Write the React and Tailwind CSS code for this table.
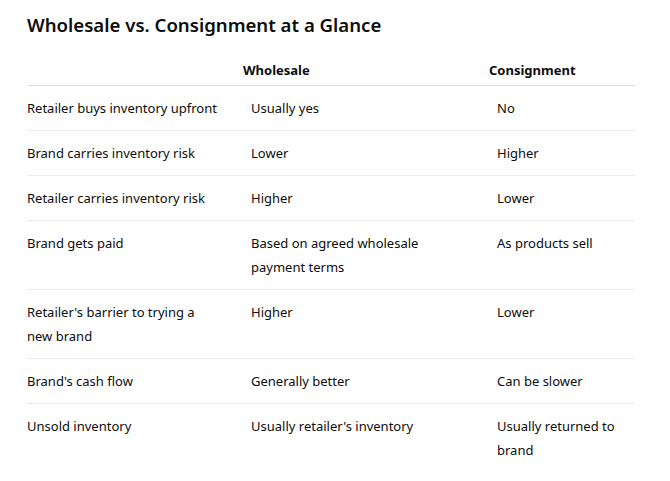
const rows = [
  ['Retailer buys inventory upfront', 'Usually yes', 'No'],
  ['Brand carries inventory risk', 'Lower', 'Higher'],
  ['Retailer carries inventory risk', 'Higher', 'Lower'],
  ['Brand gets paid', 'Based on agreed wholesale payment terms', 'As products sell'],
  ["Retailer's barrier to trying a new brand", 'Higher', 'Lower'],
  ["Brand's cash flow", 'Generally better', 'Can be slower'],
  ['Unsold inventory', "Usually retailer's inventory", 'Usually returned to brand'],
]

export default function App() {
  return (
    <div
      className="min-h-screen bg-white text-[#0d0d0d] px-[27px] pt-[11px]"
      style={{ fontFamily: '"Noto Sans", "Open Sans", sans-serif' }}
    >
      <h2 className="text-[18.6px] font-semibold leading-[28px]">
        Wholesale vs. Consignment at a Glance
      </h2>

      <table className="mt-[19px] w-[608px] border-collapse text-[13px] leading-[24px] table-fixed">
        <colgroup>
          <col className="w-[212px]" />
          <col className="w-[246px]" />
          <col className="w-[150px]" />
        </colgroup>
        <thead>
          <tr className="border-b border-[#d9d9d9]">
            <th className="pb-[3px] pt-0 text-left"></th>
            <th className="pb-[3px] pl-[4px] text-left text-[13px] font-bold">Wholesale</th>
            <th className="pb-[3px] pl-[4px] text-left text-[13px] font-bold">Consignment</th>
          </tr>
        </thead>
        <tbody>
          {rows.map((r, i) => (
            <tr key={i} className={i < rows.length - 1 ? 'border-b border-[#ececec]' : ''}>
              <td className="py-[10px] pr-[20px] align-top">{r[0]}</td>
              <td className="py-[10px] px-[12px] align-top">{r[1]}</td>
              <td className="py-[10px] px-[12px] align-top">{r[2]}</td>
            </tr>
          ))}
        </tbody>
      </table>
    </div>
  )
}
